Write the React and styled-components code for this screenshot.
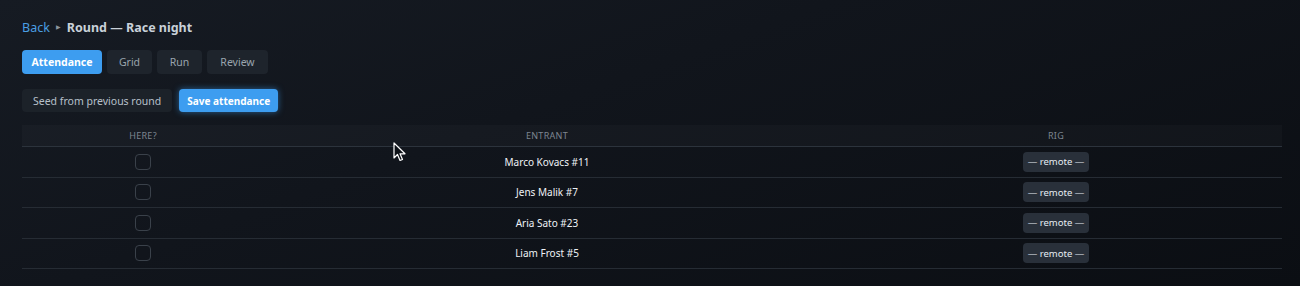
import React from "react";
import styled, { createGlobalStyle } from "styled-components";

const GlobalStyle = createGlobalStyle`
  html, body {
    margin: 0;
    padding: 0;
    height: 100%;
    background: #0e1117;
  }
  body {
    font-family: "Noto Sans", "Open Sans", sans-serif;
    color: #e6edf3;
  }
  #root {
    min-height: 100%;
  }
`;

const Page = styled.div`
  position: relative;
  min-height: 286px;
  box-sizing: border-box;
  padding: 17px 18px 0 22px;
  background: linear-gradient(160deg, #161b23 0%, #11151c 40%, #0b0e13 100%);
`;

const Breadcrumb = styled.div`
  display: flex;
  align-items: center;
  gap: 6px;
  height: 20px;
  font-size: 12.5px;
`;

const BackLink = styled.a`
  color: #4a9fe3;
  text-decoration: none;
`;

const Sep = styled.span`
  color: #8b949e;
  font-size: 6px;
`;

const Crumb = styled.span`
  color: #c9d1d9;
  font-weight: 700;
`;

const Tabs = styled.div`
  display: flex;
  gap: 5px;
  margin-top: 13px;
`;

const Tab = styled.button`
  width: ${(p) => p.$w}px;
  height: 24px;
  padding: 0;
  border: none;
  border-radius: 4px;
  font-family: inherit;
  font-size: 10.5px;
  font-weight: ${(p) => (p.$active ? 700 : 400)};
  color: ${(p) => (p.$active ? "#ffffff" : "#9aa4ae")};
  background: ${(p) => (p.$active ? "#3d9df0" : "#1e242c")};
  cursor: pointer;
`;

const Actions = styled.div`
  display: flex;
  gap: 7px;
  margin-top: 15px;
`;

const Button = styled.button`
  height: 23px;
  padding: 0 ${(p) => (p.$primary ? 8 : 11)}px;
  border: none;
  border-radius: 4px;
  font-family: inherit;
  font-size: ${(p) => (p.$primary ? 10 : 10.5)}px;
  font-weight: ${(p) => (p.$primary ? 700 : 400)};
  color: ${(p) => (p.$primary ? "#ffffff" : "#b7c0c9")};
  background: ${(p) => (p.$primary ? "#3d9df0" : "#1c2229")};
  box-shadow: ${(p) => (p.$primary ? "0 0 6px rgba(61,157,240,0.55)" : "none")};
  cursor: pointer;
`;

const Table = styled.div`
  margin-top: 13px;
  width: 1260px;
`;

const Row = styled.div`
  display: grid;
  grid-template-columns: 242px 566px 452px;
  align-items: center;
  box-sizing: border-box;
  height: ${(p) => (p.$head ? 22 : 30.5)}px;
  border-bottom: 1px solid ${(p) => (p.$head ? "#2c333c" : "#262c34")};
  background: ${(p) => (p.$head ? "rgba(255,255,255,0.025)" : "transparent")};
`;

const HeadCell = styled.div`
  text-align: center;
  font-size: 9px;
  letter-spacing: 0.3px;
  color: #7d8590;
  text-transform: uppercase;
`;

const Cell = styled.div`
  display: flex;
  justify-content: center;
  align-items: center;
  font-size: 10px;
  color: #eef2f6;
`;

const Check = styled.span`
  width: 14px;
  height: 14px;
  border: 1.5px solid #3a414a;
  border-radius: 4px;
`;

const Pill = styled.span`
  display: inline-flex;
  align-items: center;
  justify-content: center;
  width: 66px;
  height: 20px;
  border-radius: 4px;
  background: #29303a;
  color: #e6edf3;
  font-size: 9.5px;
`;

const Cursor = styled.svg`
  position: absolute;
  left: 393px;
  top: 142px;
`;

const entrants = ["Marco Kovacs #11", "Jens Malik #7", "Aria Sato #23", "Liam Frost #5"];

export default function App() {
  return (
    <Page>
      <GlobalStyle />
      <Breadcrumb>
        <BackLink href="#">Back</BackLink>
        <Sep>▶</Sep>
        <Crumb>Round — Race night</Crumb>
      </Breadcrumb>

      <Tabs>
        <Tab $active $w={80}>Attendance</Tab>
        <Tab $w={45}>Grid</Tab>
        <Tab $w={45}>Run</Tab>
        <Tab $w={61}>Review</Tab>
      </Tabs>

      <Actions>
        <Button>Seed from previous round</Button>
        <Button $primary>Save attendance</Button>
      </Actions>

      <Table>
        <Row $head>
          <HeadCell>Here?</HeadCell>
          <HeadCell>Entrant</HeadCell>
          <HeadCell>Rig</HeadCell>
        </Row>
        {entrants.map((name) => (
          <Row key={name}>
            <Cell>
              <Check />
            </Cell>
            <Cell>{name}</Cell>
            <Cell>
              <Pill>— remote —</Pill>
            </Cell>
          </Row>
        ))}
      </Table>

      <Cursor width="14" height="22" viewBox="0 0 14 22">
        <path
          d="M1 1 L1 16 L4.5 12.5 L7 18.5 L9.5 17.5 L7 11.8 L12 11.8 Z"
          fill="#0d1117"
          stroke="#ffffff"
          strokeWidth="1.2"
          strokeLinejoin="round"
        />
      </Cursor>
    </Page>
  );
}
